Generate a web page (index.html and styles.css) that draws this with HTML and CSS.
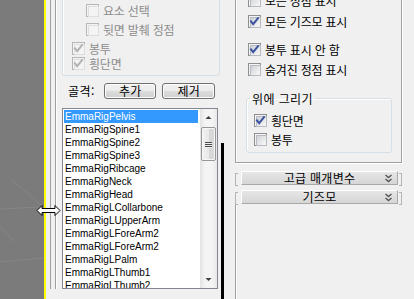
FILE: index.html
```html
<!DOCTYPE html>
<html lang="ko">
<head>
<meta charset="utf-8">
<link rel="stylesheet" href="styles.css">
</head>
<body>
<div class="screen">
  <div class="viewport">
    <svg class="grid" width="44" height="299" viewBox="0 0 44 299">
      <line x1="12" y1="180" x2="44" y2="208" />
      <line x1="0" y1="209" x2="40" y2="207" />
      <line x1="0" y1="226" x2="14" y2="242" />
      <line x1="0" y1="262" x2="44" y2="258" />
    </svg>
  </div>
  <div class="vp-edge"></div>

  <div class="panel panel-left">
    <div class="frame-outer">
      <div class="frame-inner">
        <div class="group g1">
          <div class="row ind2 r1"><span class="cb dis"></span><span class="lbl dis">요소 선택</span></div>
          <div class="row ind2 r2"><span class="cb dis"></span><span class="lbl dis">뒷면 발췌 정점</span></div>
          <div class="row ind1 r3"><span class="cb dis on"><svg viewBox="0 0 13 13"><path d="M3 6.5 L5.2 9.2 L10 3.2" /></svg></span><span class="lbl dis">봉투</span></div>
          <div class="row ind1 r4"><span class="cb dis on"><svg viewBox="0 0 13 13"><path d="M3 6.5 L5.2 9.2 L10 3.2" /></svg></span><span class="lbl dis">횡단면</span></div>
        </div>
        <div class="bone-row">
          <span class="bone-lbl">골격:</span>
          <span class="btn">추가</span>
          <span class="btn">제거</span>
        </div>
        <div class="listbox">
          <ul class="items">
            <li class="sel"><span>EmmaRigPelvis</span></li>
            <li>EmmaRigSpine1</li>
            <li>EmmaRigSpine2</li>
            <li>EmmaRigSpine3</li>
            <li>EmmaRigRibcage</li>
            <li>EmmaRigNeck</li>
            <li>EmmaRigHead</li>
            <li>EmmaRigLCollarbone</li>
            <li>EmmaRigLUpperArm</li>
            <li>EmmaRigLForeArm2</li>
            <li>EmmaRigLForeArm2</li>
            <li>EmmaRigLPalm</li>
            <li>EmmaRigLThumb1</li>
            <li>EmmaRigLThumb2</li>
          </ul>
          <div class="vscroll">
            <div class="arrow up"><svg viewBox="0 0 17 17"><path d="M5.5 10 L8.5 7 L11.5 10 Z" /></svg></div>
            <div class="thumb"><span class="grip"></span><span class="grip"></span><span class="grip"></span></div>
            <div class="track"></div>
            <div class="arrow down"><svg viewBox="0 0 17 17"><path d="M5.5 7 L8.5 10 L11.5 7 Z" /></svg></div>
          </div>
        </div>
      </div>
    </div>
  </div>

  <div class="pscroll"><div class="pthumb"></div></div>

  <div class="panel panel-right">
    <div class="rframe">
      <div class="row rr1"><span class="cb"></span><span class="lbl">모든 정점 표시</span></div>
      <div class="row rr2"><span class="cb on"><svg viewBox="0 0 13 13"><path d="M3 6.5 L5.2 9.2 L10 3.2" /></svg></span><span class="lbl">모든 기즈모 표시</span></div>
      <div class="row rr3"><span class="cb on"><svg viewBox="0 0 13 13"><path d="M3 6.5 L5.2 9.2 L10 3.2" /></svg></span><span class="lbl">봉투 표시 안 함</span></div>
      <div class="row rr4"><span class="cb"></span><span class="lbl">숨겨진 정점 표시</span></div>
      <fieldset class="group g2">
        <legend>위에 그리기</legend>
        <div class="row gr1"><span class="cb on"><svg viewBox="0 0 13 13"><path d="M3 6.5 L5.2 9.2 L10 3.2" /></svg></span><span class="lbl">횡단면</span></div>
        <div class="row gr2"><span class="cb"></span><span class="lbl">봉투</span></div>
      </fieldset>
    </div>
    <div class="rhead h1">
      <span class="brk l"></span>
      <span class="hbtn"><span class="htext">고급 매개변수</span><svg class="chev" viewBox="0 0 9 9"><path d="M1.5 1 L4.5 3.5 L7.5 1 M1.5 5 L4.5 7.5 L7.5 5" /></svg></span>
      <span class="brk r"></span>
    </div>
    <div class="rhead h2">
      <span class="brk l"></span>
      <span class="hbtn"><span class="htext">기즈모</span><svg class="chev" viewBox="0 0 9 9"><path d="M1.5 1 L4.5 3.5 L7.5 1 M1.5 5 L4.5 7.5 L7.5 5" /></svg></span>
      <span class="brk r"></span>
    </div>
    <div class="rframe2"></div>
  </div>

  <svg class="cursor" width="26" height="13" viewBox="0 0 26 13">
    <path d="M1 6.5 L6 1.5 L6 4.5 L19 4.5 L19 1.5 L24 6.5 L19 11.5 L19 8.5 L6 8.5 L6 11.5 Z" />
  </svg>
</div>
</body>
</html>
```

FILE: styles.css
```css
* { box-sizing: border-box; }
html, body { margin: 0; padding: 0; }
body {
  width: 414px;
  height: 299px;
  overflow: hidden;
  background: #f0f0f0;
  font-family: "Noto Sans CJK KR", "Liberation Sans", sans-serif;
  font-size: 12px;
  color: #000;
}
.screen {
  position: relative;
  display: flex;
  width: 414px;
  height: 299px;
  overflow: hidden;
}
.viewport {
  width: 44px;
  flex: none;
  background: #7b7b7b;
}
.grid line { stroke: #868686; stroke-width: 1; }
.vp-edge { width: 2px; flex: none; background: #ffff00; }

.panel { background: #f0f0f0; overflow: hidden; flex: none; }
.panel-left { width: 175px; padding-left: 4px; }
.frame-outer {
  height: 100%;
  border-left: 1px solid #a0a0a0;
  padding-left: 4px;
}
.frame-inner {
  height: 100%;
  border-left: 1px solid #a0a0a0;
  box-shadow: inset 1px 0 0 #ffffff;
  padding-left: 6px;
}

/* group boxes */
.group {
  border: 1px solid #d5dfe5;
  border-radius: 3px;
  box-shadow: inset 1px 1px 0 #ffffff;
}
.g1 {
  width: 158px;
  margin-top: -10px;
  padding: 13px 0 5px 9px;
}
.row {
  display: flex;
  align-items: center;
  height: 13px;
  line-height: 13px;
  white-space: nowrap;
}
.ind2 { padding-left: 14px; }
.r2 { margin-top: 6px; }
.r3 { margin-top: 6px; }
.r4 { margin-top: 2px; }

.lbl { margin-left: 4px; font-size: 12px; letter-spacing: -0.2px; }
.lbl.dis { color: #8d8d8d; }

/* checkbox */
.cb {
  position: relative;
  display: inline-block;
  flex: none;
  width: 13px;
  height: 13px;
  border: 1px solid #8e8f8f;
  background: #f4f4f4;
  padding: 1px;
}
.cb::before {
  content: "";
  display: block;
  width: 9px;
  height: 9px;
  border: 1px solid #b8bcc2;
  background: linear-gradient(135deg, #ced2d7 0%, #eeeeee 70%, #f8f8f8 100%);
}
.cb.dis { border-color: #b6b6b6; }
.cb.dis::before { border-color: #dedede; background: #f4f4f4; }
.cb svg {
  position: absolute;
  left: -1px;
  top: -1px;
  width: 13px;
  height: 13px;
}
.cb svg path { fill: none; stroke: #3d53a0; stroke-width: 2; stroke-linecap: square; }
.cb.dis svg path { stroke: #b2b2b2; }

/* bone row */
.bone-row {
  display: flex;
  align-items: center;
  height: 16px;
  margin-top: 7px;
}
.bone-lbl { width: 43px; padding-left: 6px; font-size: 12px; line-height: 16px; letter-spacing: 0.5px; }
.btn {
  width: 54px;
  height: 16px;
  margin-right: 6px;
  border: 1px solid #707070;
  border-radius: 3px;
  background: linear-gradient(#f2f2f2 0%, #ebebeb 50%, #dddddd 51%, #cfcfcf 100%);
  box-shadow: inset 0 0 0 1px #fcfcfc;
  text-align: center;
  font-size: 12px;
  line-height: 14px;
  letter-spacing: 0.3px;
}

/* listbox */
.listbox {
  display: flex;
  width: 156px;
  height: 181px;
  margin-top: 9px;
  border: 1px solid #828790;
  background: #fff;
}
.items {
  list-style: none;
  margin: 0;
  padding: 1px 0 0 0;
  width: 137px;
  overflow: hidden;
  font-family: "Liberation Sans", Arial, sans-serif;
  font-size: 10px;
}
.items li {
  height: 13px;
  line-height: 13px;
  padding-left: 2px;
  white-space: nowrap;
}
.items li.sel { padding-left: 1px; }
.items li.sel span {
  display: block;
  width: 134px;
  padding-left: 1px;
  background: #3399ff;
  color: #fff;
}
.vscroll {
  width: 17px;
  display: flex;
  flex-direction: column;
  background: linear-gradient(90deg, #e3e3e3, #f4f4f4 30%, #f4f4f4 70%, #e9e9e9);
}
.arrow { height: 17px; flex: none; }
.arrow svg { display: block; width: 17px; height: 17px; }
.arrow svg path { fill: #3e3e3e; }
.thumb {
  height: 34px;
  margin: 1px 1px 0 1px;
  border: 1px solid #979797;
  border-radius: 2px;
  background: linear-gradient(90deg, #f2f2f2, #e8e8e8 50%, #d6d6d6 51%, #d9d9d9);
  box-shadow: inset 0 0 0 1px #f7f7f7;
  display: flex;
  flex-direction: column;
  align-items: center;
  justify-content: center;
  gap: 1px;
}
.grip { display: block; width: 7px; height: 1px; background: #4b4b4b; box-shadow: 0 1px 0 #eeeeee; }
.track { flex: 1; }

/* panel scrollbar between panels */
.pscroll {
  width: 3px;
  flex: none;
  background: #f0f0f0;
  display: flex;
  flex-direction: column;
}
.pthumb { margin-top: 143px; flex: 1; background: #000; }

/* right panel */
.panel-right { width: 190px; padding-left: 11px; }
.rframe {
  width: 167px;
  margin-top: -10px;
  border: 1px solid #a0a0a0;
  box-shadow: inset 1px 1px 0 #ffffff, 1px 1px 0 #ffffff;
  padding: 3px 0 9px 12px;
}
.rr2 { margin-top: 8px; }
.rr3 { margin-top: 15px; }
.rr4 { margin-top: 7px; }

fieldset.g2 {
  width: 146px;
  margin: 16px 0 0 -2px;
  padding: 0 0 6px 7px;
  min-width: 0;
}
fieldset.g2 legend {
  margin-left: -4px;
  padding: 0 2px;
  font-size: 12px;
  line-height: 13px;
  height: 13px;
  letter-spacing: 0.4px;
}
.gr1 { margin-top: 9px; }
.gr2 { margin-top: 6px; }

.rhead {
  display: flex;
  align-items: stretch;
  width: 167px;
  height: 14px;
}
.h1 { margin-top: 8px; }
.h2 { margin-top: 5px; }
.brk {
  width: 3px;
  border-top: 1px solid #b4b4b4;
  border-bottom: 1px solid #b4b4b4;
  margin-top: 2px;
  margin-bottom: -1px;
}
.brk.l { border-left: 1px solid #b4b4b4; margin-right: 3px; }
.brk.r { border-right: 1px solid #b4b4b4; margin-left: 1px; }
.hbtn {
  position: relative;
  flex: 1;
  display: flex;
  align-items: center;
  justify-content: center;
  border-top: 1px solid #ffffff;
  border-left: 1px solid #ffffff;
  border-bottom: 1px solid #a8a8a8;
  border-right: 1px solid #a8a8a8;
  background: linear-gradient(#e6e6e6, #d6d6d6);
}
.htext { font-size: 12px; line-height: 12px; letter-spacing: 0.3px; }
.chev { position: absolute; right: 4px; top: 2px; width: 9px; height: 9px; }
.chev path { fill: none; stroke: #555; stroke-width: 1.4; }

.rframe2 {
  width: 167px;
  height: 120px;
  margin-top: 1px;
  border-left: 1px solid #a0a0a0;
  box-shadow: inset 1px 0 0 #ffffff;
}

/* cursor overlay */
.cursor { position: absolute; left: 36px; top: 204px; }
.cursor path { fill: #ffffff; stroke: #000000; stroke-width: 1; stroke-linejoin: miter; }
```
